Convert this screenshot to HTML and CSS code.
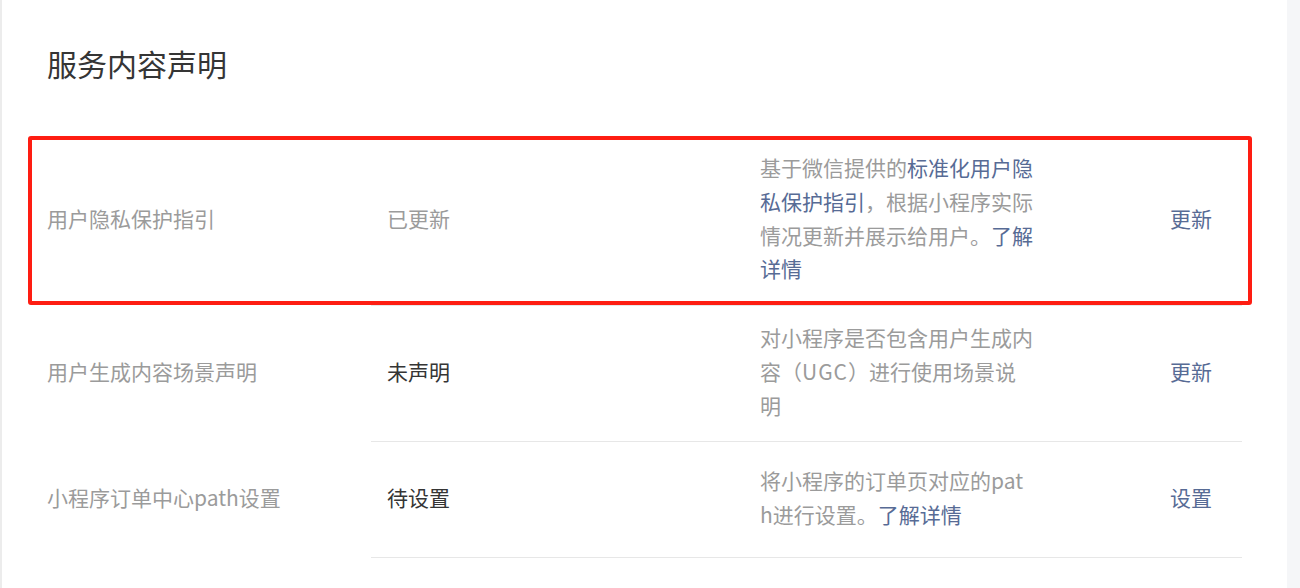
FILE: index.html
```html
<!DOCTYPE html>
<html lang="zh-CN">
<head>
<meta charset="utf-8">
<title>服务内容声明</title>
<link rel="stylesheet" href="styles.css">
</head>
<body>
<div class="page">
  <main class="card">
    <h1 class="title">服务内容声明</h1>
    <div class="table">
      <div class="row row-highlight">
        <div class="label">用户隐私保护指引</div>
        <div class="cells">
          <div class="cell status muted">已更新</div>
          <div class="cell desc"><p>基于微信提供的<a class="link">标准化用户隐私保护指引</a>，根据小程序实际情况更新并展示给用户。<a class="link">了解详情</a></p></div>
          <div class="cell action"><a class="link">更新</a></div>
        </div>
        <div class="highlight-box"></div>
      </div>
      <div class="row">
        <div class="label">用户生成内容场景声明</div>
        <div class="cells">
          <div class="cell status">未声明</div>
          <div class="cell desc"><p>对小程序是否包含用户生成内容（<span class="abbr">UGC</span>）进行使用场景说明</p></div>
          <div class="cell action"><a class="link">更新</a></div>
        </div>
      </div>
      <div class="row">
        <div class="label">小程序订单中心path设置</div>
        <div class="cells">
          <div class="cell status">待设置</div>
          <div class="cell desc"><p>将小程序的订单页对应的path进行设置。<a class="link">了解详情</a></p></div>
          <div class="cell action"><a class="link">设置</a></div>
        </div>
      </div>
    </div>
  </main>
</div>
</body>
</html>
```

FILE: styles.css
```css
html, body {
  margin: 0;
  padding: 0;
}
body {
  background: #f5f6f8;
  font-family: "Noto Sans CJK SC", "Noto Sans", sans-serif;
  color: #353535;
}
.page {
  display: flex;
  height: 588px;
  overflow: hidden;
  border-left: 2px solid #ececec;
}
.card {
  width: 1285px;
  background: #ffffff;
  padding: 43px 45px 0 45px;
  box-sizing: border-box;
}
.title {
  margin: 0 0 53px 0;
  font-size: 30px;
  line-height: 40px;
  font-weight: normal;
  color: #353535;
}
.table {
  display: flex;
  flex-direction: column;
}
.row {
  position: relative;
  display: grid;
  grid-template-columns: 324px 1fr;
  align-items: stretch;
  font-size: 21px;
  line-height: 33.75px;
}
.label {
  display: flex;
  align-items: center;
  padding-bottom: 4px;
  color: #9b9b9b;
}
.cells {
  display: grid;
  grid-template-columns: 373px 410px 88px;
  align-items: center;
  border-bottom: 1px solid #e7e7e7;
  min-height: 116px;
  box-sizing: border-box;
}
.cell {
  padding: 15px 16px 19px 16px;
}
.status {
  color: #353535;
}
.status.muted {
  color: #9b9b9b;
}
.desc p {
  margin: 0;
  width: 275px;
  color: #9b9b9b;
  word-break: break-all;
}
.abbr {
  letter-spacing: 1px;
}
.link {
  color: #576b95;
  text-decoration: none;
  cursor: pointer;
}
.highlight-box {
  position: absolute;
  top: 0;
  bottom: 1px;
  left: -19px;
  right: -10px;
  border: 4px solid #fe1d12;
  border-radius: 3px;
  pointer-events: none;
}
```
